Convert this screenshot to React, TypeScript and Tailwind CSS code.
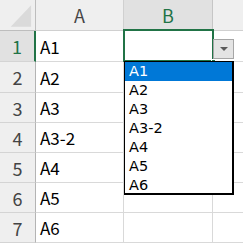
import React from 'react';

const rows = [
  { n: 1, a: 'A1', h: 'h-[31px]' },
  { n: 2, a: 'A2', h: 'h-[31px]' },
  { n: 3, a: 'A3', h: 'h-[30px]' },
  { n: 4, a: 'A3-2', h: 'h-[30px]' },
  { n: 5, a: 'A4', h: 'h-[30px]' },
  { n: 6, a: 'A5', h: 'h-[30px]' },
  { n: 7, a: 'A6', h: 'h-[30px]' },
];

const options = ['A1', 'A2', 'A3', 'A3-2', 'A4', 'A5', 'A6'];

export default function App() {
  return (
    <div
      className="relative w-[243px] h-[250px] overflow-hidden bg-white text-[18px] leading-none"
      style={{ fontFamily: '"Noto Sans CJK JP", "Noto Sans", sans-serif' }}
    >
      {/* column headers */}
      <div className="flex h-[31px] bg-[#efefef] text-[#444]">
        <div className="w-[36px] shrink-0 border-r border-b border-[#bdbdbd] flex items-center justify-center">
          <svg width="36" height="30" viewBox="0 0 36 30">
            <polygon points="32,5 32,27 11,27" fill="#dadada" />
          </svg>
        </div>
        <div className="w-[88px] shrink-0 border-r border-b border-[#d0d0d0] flex items-center justify-center">A</div>
        <div className="w-[89px] shrink-0 border-r border-b border-[#c6c6c6] bg-[#e1e1e1] text-[#217346] flex items-center justify-center">B</div>
        <div className="flex-1 border-b border-[#d0d0d0]" />
      </div>

      {rows.map(r => (
        <div key={r.n} className={`flex ${r.h}`}>
          <div
            className={`w-[36px] shrink-0 border-b border-[#d4d4d4] flex items-center justify-center ${
              r.n === 1
                ? 'bg-[#e1e1e1] text-[#217346] border-r-2 border-r-[#217346]'
                : 'bg-[#efefef] text-[#444] border-r border-r-[#b4b4b4]'
            }`}
          >
            {r.n}
          </div>
          <div className="w-[88px] shrink-0 border-r border-b border-[#d9d9d9] flex items-center pl-[4px] text-[17px] text-black">
            {r.a}
          </div>
          <div className="w-[89px] shrink-0 border-r border-b border-[#d9d9d9]" />
          <div className="flex-1 border-b border-[#d9d9d9]" />
        </div>
      ))}

      {/* selected cell B1 */}
      <div className="absolute left-[123px] top-[29px] w-[91px] h-[33px] border-2 border-[#217346]" />
      <div className="absolute left-[211px] top-[59px] w-[5px] h-[5px] bg-[#217346] border border-white" />

      {/* dropdown button */}
      <div className="absolute left-[213px] top-[39px] w-[21px] h-[20px] bg-[#e4e4e4] border border-[#a6a6a6] flex items-center justify-center">
        <svg width="8" height="5" viewBox="0 0 8 5">
          <polygon points="0,0 8,0 4,4" fill="#5a5a5a" />
        </svg>
      </div>

      {/* dropdown list */}
      <div
        className="absolute left-[124px] top-[61px] w-[110px] h-[134px] bg-white border border-black border-r-2 border-b-2 text-[14.5px] leading-[19px]"
        style={{ fontFamily: '"DejaVu Sans", sans-serif' }}
      >
        {options.map((o, i) => (
          <div
            key={o}
            className={`h-[19px] pl-[4px] ${i === 0 ? 'bg-[#0078d7] text-white' : 'text-black'}`}
          >
            {o}
          </div>
        ))}
      </div>
    </div>
  );
}
